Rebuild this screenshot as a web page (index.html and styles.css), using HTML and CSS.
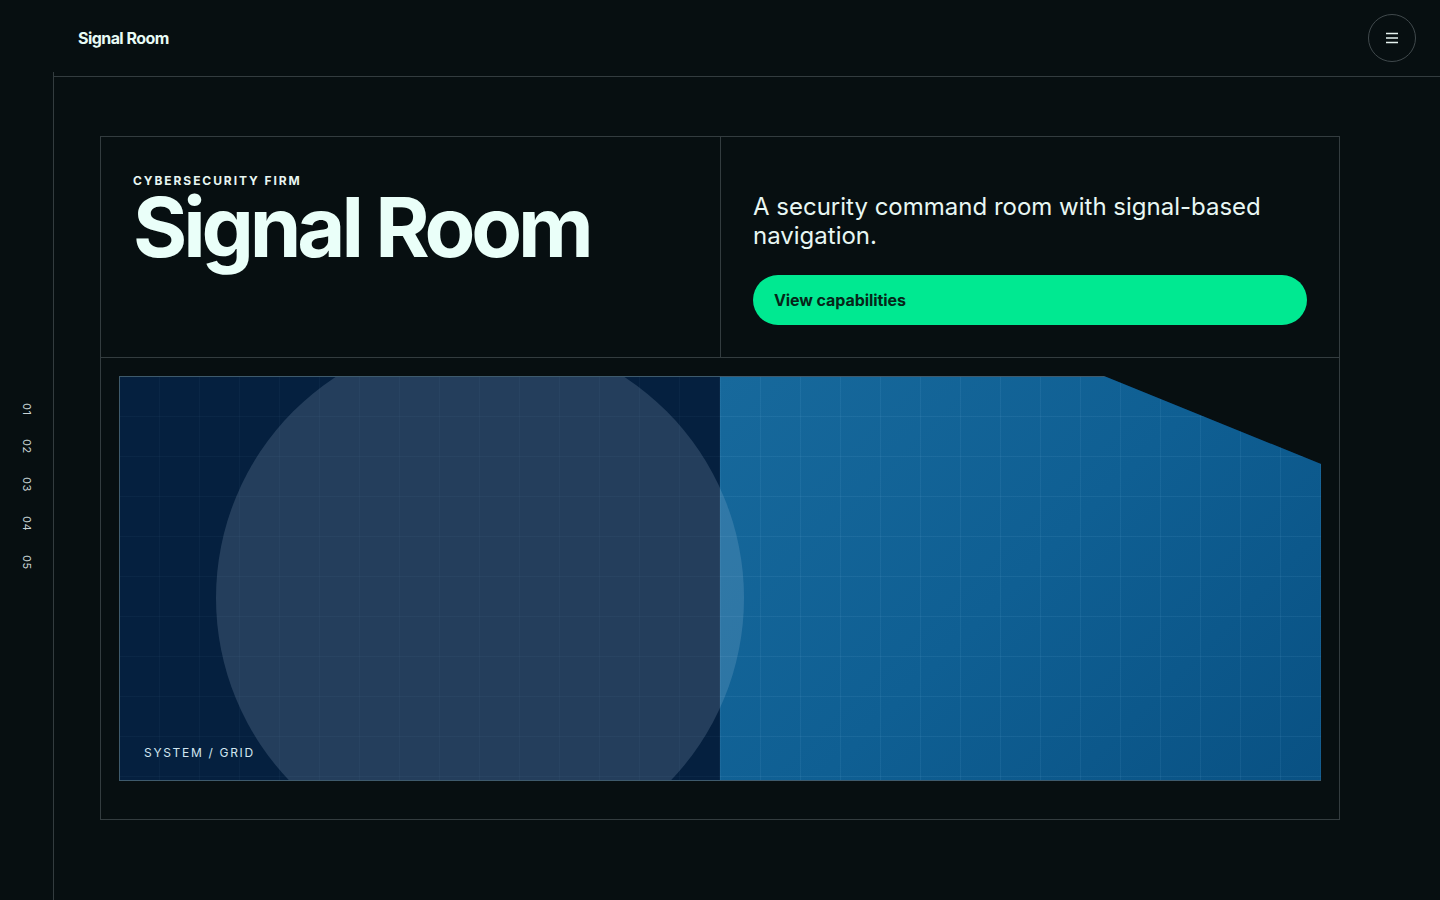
FILE: index.html
```html
<!DOCTYPE html>
<html lang="en">
<head>
<meta charset="utf-8">
<title>Signal Room</title>
<link rel="stylesheet" href="styles.css">
</head>
<body>
<header class="topbar">
  <a class="logo" href="#">Signal Room</a>
  <button class="menu-btn" aria-label="Menu">
    <svg width="14" height="12" viewBox="0 0 14 12" aria-hidden="true">
      <path d="M1 1.5h12M1 6h12M1 10.5h12" stroke="#e6f3f0" stroke-width="1.4" fill="none"/>
    </svg>
  </button>
</header>
<div class="shell">
  <aside class="rail">
    <nav class="rail-nav">
      <span>01</span>
      <span>02</span>
      <span>03</span>
      <span>04</span>
      <span>05</span>
    </nav>
  </aside>
  <main class="main">
    <section class="card">
      <div class="card-top">
        <div class="intro">
          <p class="eyebrow">CYBERSECURITY FIRM</p>
          <h1 class="title">Signal Room</h1>
        </div>
        <div class="pitch">
          <p class="lead">A security command room with signal-based navigation.</p>
          <a class="cta" href="#">View capabilities</a>
        </div>
      </div>
      <div class="card-bottom">
        <div class="visual">
          <div class="panel"></div>
          <div class="orb"></div>
          <span class="visual-label">SYSTEM / GRID</span>
        </div>
      </div>
    </section>
  </main>
</div>
</body>
</html>
```

FILE: styles.css
```css
* { box-sizing: border-box; }

html, body {
  margin: 0;
  padding: 0;
  height: 100%;
}

body {
  background: #070f11;
  color: #e6f7f2;
  font-family: Inter, "Noto Sans", "Liberation Sans", sans-serif;
  display: flex;
  flex-direction: column;
  height: 100vh;
  overflow: hidden;
}

.topbar {
  height: 76px;
  flex: 0 0 76px;
  display: flex;
  align-items: center;
  justify-content: space-between;
  padding: 0 24px 0 78px;
}

.logo {
  color: #e8fbf5;
  text-decoration: none;
  font-weight: 700;
  font-size: 16px;
  letter-spacing: -0.035em;
}

.menu-btn {
  width: 48px;
  height: 48px;
  border-radius: 50%;
  border: 1px solid #40494c;
  background: transparent;
  display: flex;
  align-items: center;
  justify-content: center;
  padding: 0;
  cursor: pointer;
}

.shell {
  flex: 1;
  display: flex;
  min-height: 0;
}

.rail {
  width: 54px;
  flex: 0 0 54px;
  border-right: 1px solid #333c3f;
  margin-top: -4px;
  display: flex;
  align-items: center;
  justify-content: center;
}

.rail-nav {
  display: flex;
  flex-direction: column;
  align-items: center;
  gap: 24px;
}

.rail-nav span {
  writing-mode: vertical-rl;
  font-size: 11px;
  line-height: 1;
  color: #c9d3d4;
  letter-spacing: 0.04em;
}

.main {
  flex: 1;
  border-top: 1px solid #333c3f;
  padding: 59px 100px 0 46px;
}

.card {
  border: 1px solid #333c3f;
  height: 684px;
  display: flex;
  flex-direction: column;
}

.card-top {
  display: grid;
  grid-template-columns: 620px 1fr;
  height: 221px;
  border-bottom: 1px solid #333c3f;
}

.intro {
  border-right: 1px solid #333c3f;
  padding: 38px 32px 32px;
}

.eyebrow {
  margin: 0;
  font-size: 12px;
  line-height: 1;
  font-weight: 700;
  letter-spacing: 0.16em;
  color: #e8f6f2;
}

.title {
  margin: 7px 0 0;
  font-size: 83px;
  line-height: 0.8;
  font-weight: 700;
  letter-spacing: -0.05em;
  color: #eafff9;
}

.pitch {
  padding: 32px;
  display: flex;
  flex-direction: column;
  justify-content: flex-end;
}

.lead {
  margin: 0 0 24px;
  font-size: 24px;
  line-height: 1.2;
  font-weight: 400;
  color: #e8f7f3;
}

.cta {
  display: flex;
  align-items: center;
  height: 50px;
  padding: 0 21px;
  border-radius: 25px;
  background: #00e991;
  color: #062619;
  font-weight: 700;
  font-size: 16px;
  letter-spacing: -0.005em;
  text-decoration: none;
}

.card-bottom {
  flex: 1;
  padding: 18px 18px 38px;
}

.visual {
  position: relative;
  height: 405px;
  border: 1px solid #3e5a6c;
  border-right: 0;
  overflow: hidden;
  background-color: #05203f;
  background-image:
    linear-gradient(to right, rgba(120, 170, 220, 0.045) 1px, transparent 1px),
    linear-gradient(to bottom, rgba(120, 170, 220, 0.045) 1px, transparent 1px);
  background-size: 40px 40px;
  background-position: -1px -1px;
  clip-path: polygon(0 0, calc(100% - 217px) 0, 100% 88px, 100% 100%, 0 100%);
}

.panel {
  position: absolute;
  top: -1px;
  bottom: 0;
  left: 600px;
  right: 0;
  background-image:
    linear-gradient(to right, rgba(150, 210, 250, 0.08) 1px, transparent 1px),
    linear-gradient(to bottom, rgba(150, 210, 250, 0.08) 1px, transparent 1px),
    linear-gradient(135deg, #17699c 0%, #0f5f93 50%, #095183 100%);
  background-size: 40px 40px, 40px 40px, 100% 100%;
  background-position: 0 0, 0 0, 0 0;
}

.orb {
  position: absolute;
  left: 96px;
  top: -43px;
  width: 528px;
  height: 528px;
  border-radius: 50%;
  background: rgba(190, 215, 240, 0.17);
}

.visual-label {
  position: absolute;
  left: 24px;
  bottom: 21px;
  font-size: 12px;
  line-height: 1;
  letter-spacing: 0.14em;
  color: #d2e6f0;
}
```
